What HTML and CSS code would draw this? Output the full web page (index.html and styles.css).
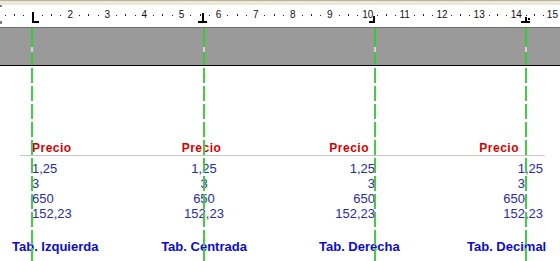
FILE: index.html
```html
<!DOCTYPE html>
<html lang="es">
<head>
<meta charset="utf-8">
<title>Tabulaciones</title>
<link rel="stylesheet" href="styles.css">
</head>
<body>
<div class="page">
  <div class="topstrip"></div>
  <div class="ruler">
    <div class="scale">
      <span class="cm"><span class="q"><span class="n"></span></span><span class="q"><span class="dot"></span></span><span class="q"><span class="tick"></span></span><span class="q"><span class="dot"></span></span></span>
      <span class="cm"><span class="q"><span class="n"></span></span><span class="q"><span class="dot"></span></span><span class="q"><span class="tick"></span></span><span class="q"><span class="dot"></span></span></span>
      <span class="cm"><span class="q"><span class="n">2</span></span><span class="q"><span class="dot"></span></span><span class="q"><span class="tick"></span></span><span class="q"><span class="dot"></span></span></span>
      <span class="cm"><span class="q"><span class="n">3</span></span><span class="q"><span class="dot"></span></span><span class="q"><span class="tick"></span></span><span class="q"><span class="dot"></span></span></span>
      <span class="cm"><span class="q"><span class="n">4</span></span><span class="q"><span class="dot"></span></span><span class="q"><span class="tick"></span></span><span class="q"><span class="dot"></span></span></span>
      <span class="cm"><span class="q"><span class="n">5</span></span><span class="q"><span class="dot"></span></span><span class="q"><span class="tick"></span></span><span class="q"><span class="dot"></span></span></span>
      <span class="cm"><span class="q"><span class="n">6</span></span><span class="q"><span class="dot"></span></span><span class="q"><span class="tick"></span></span><span class="q"><span class="dot"></span></span></span>
      <span class="cm"><span class="q"><span class="n">7</span></span><span class="q"><span class="dot"></span></span><span class="q"><span class="tick"></span></span><span class="q"><span class="dot"></span></span></span>
      <span class="cm"><span class="q"><span class="n">8</span></span><span class="q"><span class="dot"></span></span><span class="q"><span class="tick"></span></span><span class="q"><span class="dot"></span></span></span>
      <span class="cm"><span class="q"><span class="n">9</span></span><span class="q"><span class="dot"></span></span><span class="q"><span class="tick"></span></span><span class="q"><span class="dot"></span></span></span>
      <span class="cm"><span class="q"><span class="n">10</span></span><span class="q"><span class="dot"></span></span><span class="q"><span class="tick"></span></span><span class="q"><span class="dot"></span></span></span>
      <span class="cm"><span class="q"><span class="n">11</span></span><span class="q"><span class="dot"></span></span><span class="q"><span class="tick"></span></span><span class="q"><span class="dot"></span></span></span>
      <span class="cm"><span class="q"><span class="n">12</span></span><span class="q"><span class="dot"></span></span><span class="q"><span class="tick"></span></span><span class="q"><span class="dot"></span></span></span>
      <span class="cm"><span class="q"><span class="n">13</span></span><span class="q"><span class="dot"></span></span><span class="q"><span class="tick"></span></span><span class="q"><span class="dot"></span></span></span>
      <span class="cm"><span class="q"><span class="n">14</span></span><span class="q"><span class="dot"></span></span><span class="q"><span class="tick"></span></span><span class="q"><span class="dot"></span></span></span>
      <span class="cm"><span class="q"><span class="n">15</span></span></span>
    </div>
    <svg class="markers" width="560" height="22" viewBox="0 0 560 22" aria-hidden="true">
      <g fill="#000">
        <rect x="0" y="0" width="2" height="2" fill="#808080"/>
        <rect x="0" y="16" width="2" height="3" fill="#808080"/>
        <rect x="32" y="7" width="2" height="11"/>
        <rect x="32" y="16" width="7" height="2"/>
        <rect x="202" y="8" width="2" height="9"/>
        <rect x="198" y="16" width="9" height="2"/>
        <rect x="373" y="11" width="2" height="7"/>
        <rect x="369" y="16" width="6" height="2"/>
        <rect x="525" y="12" width="2" height="5"/>
        <rect x="521" y="16" width="9" height="2"/>
        <rect x="528" y="13" width="2" height="2"/>
      </g>
    </svg>
  </div>
  <div class="band"></div>
  <div class="doc">
    <div class="row head">
      <div class="a">Precio</div>
      <div class="b">Precio</div>
      <div class="r">Precio</div>
      <div class="d"><span class="int">Precio</span></div>
    </div>
    <div class="rule"></div>
    <div class="body">
      <div class="row">
        <div class="a">1,25</div>
        <div class="b">1,25</div>
        <div class="r">1,25</div>
        <div class="d"><span class="int">1</span><span class="frac">,25</span></div>
      </div>
      <div class="row">
        <div class="a">3</div>
        <div class="b">3</div>
        <div class="r">3</div>
        <div class="d"><span class="int">3</span></div>
      </div>
      <div class="row">
        <div class="a">650</div>
        <div class="b">650</div>
        <div class="r">650</div>
        <div class="d"><span class="int">650</span></div>
      </div>
      <div class="row">
        <div class="a">152,23</div>
        <div class="b">152,23</div>
        <div class="r">152,23</div>
        <div class="d"><span class="int">152</span><span class="frac">,23</span></div>
      </div>
    </div>
    <div class="labels">
      <div class="l1">Tab. Izquierda</div>
      <div class="l2">Tab. Centrada</div>
      <div class="l3">Tab. Derecha</div>
      <div class="l4">Tab. Decimal</div>
    </div>
  </div>
  <div class="guides">
    <div class="guide g1"><div class="g-solid"></div><div class="g-dash"></div></div>
    <div class="guide g2"><div class="g-solid"></div><div class="g-dash"></div></div>
    <div class="guide g3"><div class="g-solid"></div><div class="g-dash"></div></div>
    <div class="guide g4"><div class="g-solid"></div><div class="g-dash"></div></div>
  </div>
</div>
</body>
</html>
```

FILE: styles.css
```css
* { box-sizing: border-box; margin: 0; padding: 0; }

body {
  margin: 0;
  background: #fff;
  font-family: "Liberation Sans", Arial, sans-serif;
  overflow: hidden;
}

.page {
  position: relative;
  width: 560px;
  height: 261px;
  overflow: hidden;
  background: #fff;
}

.topstrip {
  height: 5px;
  background: #ece9d8;
  border-top: 1px solid #b8b4a4;
}

.ruler {
  position: relative;
  height: 23px;
  background: #fff;
  border-bottom: 1px solid #6e6e6e;
  overflow: hidden;
}

.scale {
  display: flex;
  height: 20px;
  margin-left: -8.64px;
}

.cm {
  flex: none;
  width: 37.1px;
  display: flex;
}

.q {
  flex: 1;
  display: flex;
  align-items: center;
  justify-content: center;
}

.cm:last-child .q { flex: none; width: 9.275px; }

.n {
  font-size: 10px;
  line-height: 10px;
  color: #111;
  white-space: nowrap;
}

.dot {
  width: 1px;
  height: 1px;
  background: #222;
}

.tick {
  width: 1px;
  height: 2px;
  background: #222;
}

.markers {
  position: absolute;
  left: 0;
  top: 0;
}

.band {
  height: 38px;
  background: #9a9a9a;
  border-bottom: 1px solid #000;
}

.doc {
  padding-top: 75px;
}

.row {
  display: grid;
  grid-template-columns: 118px 172px 160px 110px;
  font-size: 13px;
  line-height: 15px;
  color: #2b2b9e;
  white-space: nowrap;
}

.a { padding-left: 32px; }
.b { text-align: center; }
.r { text-align: right; padding-right: 75px; }
.d { display: flex; }
.int { flex: none; width: 75px; text-align: right; }

.head {
  font-size: 12px;
  line-height: 14px;
  font-weight: bold;
  color: #d40000;
  letter-spacing: 0.5px;
}
.head .b { padding-right: 5px; }
.head .r { padding-right: 81px; }
.head .int { padding-right: 6px; }

.rule {
  height: 1px;
  background: #c8c8c8;
  margin: 0 15px 0 20px;
}

.body {
  padding-top: 5px;
}

.labels {
  display: grid;
  grid-template-columns: 118px 172px 160px 110px;
  margin-top: 18px;
  font-size: 13px;
  line-height: 15px;
  font-weight: bold;
  color: #0c0cc8;
  white-space: nowrap;
}
.l1 { padding-left: 12px; }
.l2 { text-align: center; }
.l3 { padding-left: 29px; }
.l4 { padding-left: 17px; }

.guides {
  position: absolute;
  top: 28px;
  bottom: 0;
  left: 0;
  right: 0;
  pointer-events: none;
}

.guide {
  position: absolute;
  top: 0;
  bottom: 0;
  width: 2px;
  display: flex;
  flex-direction: column;
}
.g1 { left: 31px; }
.g2 { left: 203px; }
.g3 { left: 374px; }
.g4 { left: 525px; }

.g-solid {
  position: relative;
  height: 37px;
  background: #33cc33;
}
.g-solid::after {
  content: "";
  position: absolute;
  left: 0;
  top: 19px;
  width: 2px;
  height: 5px;
  background: #d4d4d4;
}

.g-dash {
  flex: 1;
  background: repeating-linear-gradient(to bottom, transparent 0 3px, #44cc44 3px 18px);
}
```
